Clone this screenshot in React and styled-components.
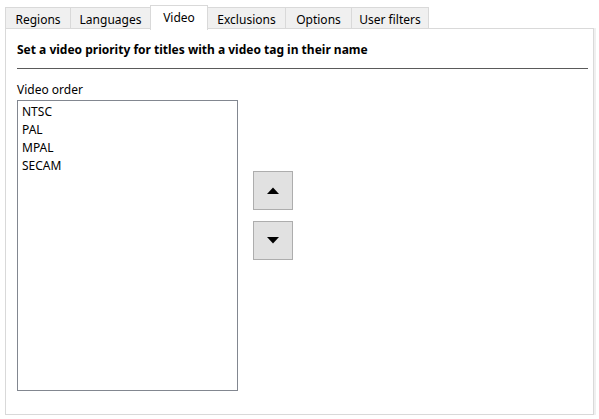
import React from "react";
import styled, { createGlobalStyle } from "styled-components";

const Global = createGlobalStyle`
  html, body { margin: 0; padding: 0; background: #ffffff; }
  body { font-family: "Segoe UI", "Noto Sans", "Open Sans", sans-serif; font-size: 12px; color: #000; }
  * { box-sizing: border-box; }
`;

const Window = styled.div`
  width: 599px;
  height: 419px;
  padding: 5px 0 0 5px;
  background: #ffffff;
`;

const TabStrip = styled.div`
  display: flex;
  align-items: flex-end;
  height: 24px;
  position: relative;
  z-index: 1;
`;

const Tab = styled.div`
  height: ${(p) => (p.$active ? "25px" : "22px")};
  margin-bottom: ${(p) => (p.$active ? "-1px" : "0")};
  width: ${(p) => p.$w}px;
  margin-left: -1px;
  &:first-child { margin-left: 0; }
  border: 1px solid #d9d9d9;
  border-bottom: ${(p) => (p.$active ? "none" : "1px solid #d9d9d9")};
  background: ${(p) => (p.$active ? "#ffffff" : "#f0f0f0")};
  position: relative;
  z-index: ${(p) => (p.$active ? 2 : 1)};
  display: flex;
  align-items: center;
  justify-content: center;
  padding-top: ${(p) => (p.$active ? "0" : "2px")};
  padding-bottom: ${(p) => (p.$active ? "2px" : "0")};
  font-size: 12px;
  white-space: nowrap;
`;

const Panel = styled.div`
  width: 589px;
  height: 387px;
  margin-top: -1px;
  border: 1px solid #d9d9d9;
  box-shadow: 2px 0 0 #f0f0f0;
  background: #ffffff;
  padding: 13px 5px 0 11px;
  display: flex;
  flex-direction: column;
`;

const Heading = styled.div`
  font-weight: bold;
  line-height: 16px;
  height: 16px;
  font-size: 12px;
`;

const Separator = styled.div`
  height: 1px;
  width: 571px;
  background: #5a5a5a;
  margin-top: 10px;
`;

const Label = styled.div`
  margin-top: 13px;
  line-height: 16px;
  height: 16px;
`;

const Row = styled.div`
  display: flex;
  margin-top: 2px;
  gap: 15px;
`;

const ListBox = styled.div`
  width: 221px;
  height: 291px;
  border: 1px solid #828790;
  background: #fff;
  padding: 2px 0 0 4px;
  display: flex;
  flex-direction: column;
`;

const ListItem = styled.div`
  height: 18px;
  line-height: 18px;
`;

const ButtonColumn = styled.div`
  display: flex;
  flex-direction: column;
  gap: 11px;
  padding-top: 71px;
`;

const ArrowButton = styled.button`
  width: 40px;
  height: 39px;
  background: #e1e1e1;
  border: 1px solid #adadad;
  padding: 0;
  display: flex;
  align-items: center;
  justify-content: center;
  cursor: default;
`;

const Arrow = ({ down }) => (
  <svg width="12" height="7" viewBox="0 0 12 7">
    {down ? (
      <polygon points="0,0 12,0 6,6.5" fill="#000" />
    ) : (
      <polygon points="6,0.5 12,7 0,7" fill="#000" />
    )}
  </svg>
);

const tabs = [
  { label: "Regions", w: 66 },
  { label: "Languages", w: 81 },
  { label: "Video", w: 58, active: true },
  { label: "Exclusions", w: 79 },
  { label: "Options", w: 67 },
  { label: "User filters", w: 78 },
];

const items = ["NTSC", "PAL", "MPAL", "SECAM"];

export default function App() {
  return (
    <>
      <Global />
      <Window>
        <TabStrip>
          {tabs.map((t) => (
            <Tab key={t.label} $w={t.w} $active={t.active}>
              {t.label}
            </Tab>
          ))}
        </TabStrip>
        <Panel>
          <Heading>Set a video priority for titles with a video tag in their name</Heading>
          <Separator />
          <Label>Video order</Label>
          <Row>
            <ListBox>
              {items.map((i) => (
                <ListItem key={i}>{i}</ListItem>
              ))}
            </ListBox>
            <ButtonColumn>
              <ArrowButton>
                <Arrow />
              </ArrowButton>
              <ArrowButton>
                <Arrow down />
              </ArrowButton>
            </ButtonColumn>
          </Row>
        </Panel>
      </Window>
    </>
  );
}
